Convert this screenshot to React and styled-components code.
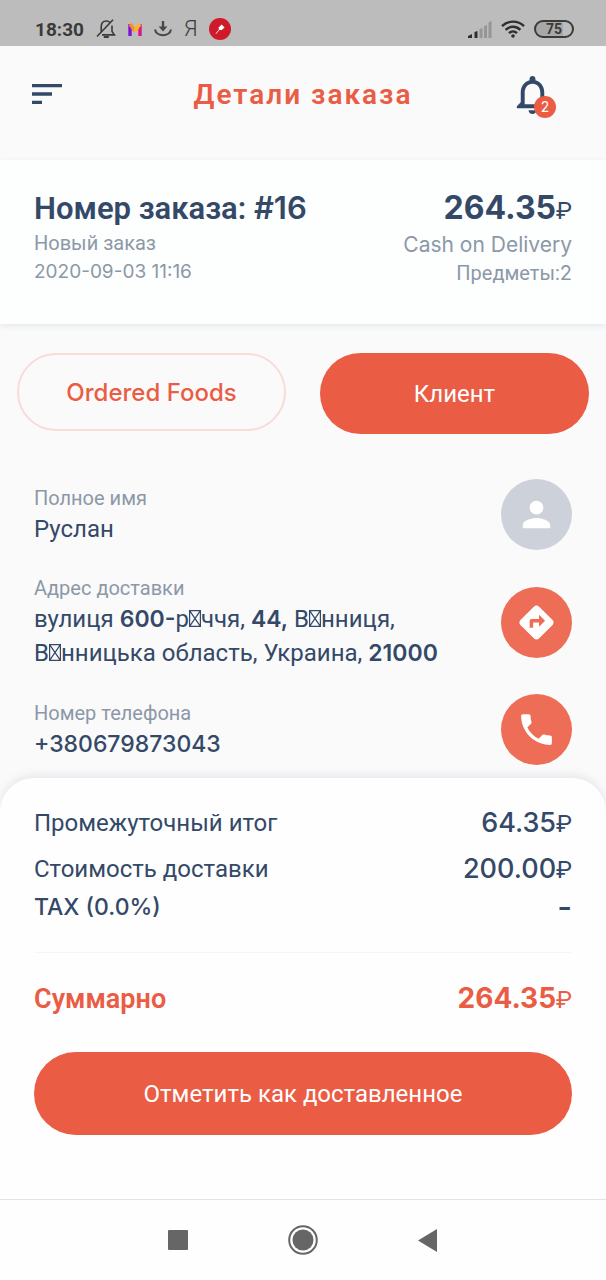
import React from 'react';
import styled, { createGlobalStyle, css } from 'styled-components';
import {
	MdSort,
	MdNotificationsNone,
	MdPerson,
	MdDirections,
	MdPhone,
} from 'react-icons/md';

const colors = {
	accent: '#ea5c44',
	main: '#344968',
	muted: '#8c98a8',
	page: '#fafafa',
};

const GlobalStyle = createGlobalStyle`
	* { box-sizing: border-box; }
	body {
		margin: 0;
		background: ${colors.page};
		color: ${colors.main};
		font-family: Roboto, "Noto Sans", sans-serif;
	}
	h1, h2, p { margin: 0; }
	button {
		padding: 0;
		border: 0;
		background: none;
		color: inherit;
		font-family: inherit;
		cursor: pointer;
	}
	svg { display: block; }
`

const Screen = styled.div`
	display: flex;
	flex-direction: column;
	min-height: 100vh;
`

const StatusBar = styled.div`
	display: flex;
	justify-content: space-between;
	align-items: center;
	height: 46px;
	padding: 12px 32px 0 35px;
	background: #bcbcbc;
	color: #3a3a3a;
`

const StatusGroup = styled.div`
	display: flex;
	align-items: center;
	gap: ${props => props.$gap};
`

const Clock = styled.span`
	font-size: 19px;
	font-weight: 700;
`

const Notifier = styled.span`
	font-size: 22px;
	line-height: 24px;
	font-weight: 300;
`

const Battery = styled.span`
	display: flex;
	align-items: center;
	justify-content: center;
	width: 40px;
	height: 18px;
	border: 2px solid #3a3a3a;
	border-radius: 9px;
	background: linear-gradient(to right, #a8a8a8 75%, transparent 75%);
	font-size: 14px;
	font-weight: 700;
`

const Header = styled.header`
	display: grid;
	grid-template-columns: 1fr auto 1fr;
	align-items: center;
	height: 114px;
	padding: 0 50px 18px 27px;
`

const MenuButton = styled.button`
	justify-self: start;
`

const Title = styled.h1`
	padding-left: 23px;
	color: ${colors.accent};
	font-size: 28px;
	font-weight: 600;
	letter-spacing: 2px;
`

const BellButton = styled.button`
	position: relative;
	justify-self: end;
`

const Badge = styled.span`
	position: absolute;
	right: 0;
	bottom: 0;
	width: 22px;
	border-radius: 50%;
	background: ${colors.accent};
	color: #fff;
	font: 14px/22px Inter, sans-serif;
`

const Summary = styled.section`
	display: flex;
	justify-content: space-between;
	height: 164px;
	padding: 28px 34px;
	background: #fdfefe;
	box-shadow: 0 2px 6px rgba(52, 73, 104, 0.1);
`

const SummaryColumn = styled.div`
	text-align: ${props => props.$align || 'left'};
`

const OrderNumber = styled.h2`
	font-size: 31px;
	line-height: 40px;
	font-weight: 600;
`

const Note = styled.p`
	color: ${colors.muted};
	font-size: 20px;
	line-height: 28px;
`

const Latin = styled.span`
	font-family: Inter, sans-serif;
	font-size: ${props => props.$size || 'inherit'};
	font-weight: ${props => props.$weight || 400};
`

const Amount = styled.span`
	font-family: Inter, sans-serif;
	font-size: ${props => props.$size};
	line-height: 40px;
	font-weight: ${props => props.$weight || 500};
`

const Currency = styled.span`
	font-family: Roboto, sans-serif;
	font-size: 24px;
	font-weight: 400;
`

const Tabs = styled.div`
	display: grid;
	grid-template-columns: 1fr 1fr;
	align-items: start;
	gap: 34px;
	padding: 29px 17px 45px;
`

const Tab = styled.button`
	height: 78px;
	border: 2px solid #f9dcd7;
	border-radius: 41px;
	color: ${colors.accent};
	font-size: 24px;
	font-family: Inter, sans-serif;
	font-weight: 500;
	${props => props.$active && css`
		height: 81px;
		border: 0;
		background: ${colors.accent};
		color: #fff;
		font-family: Roboto, sans-serif;
		font-weight: 400;
	`}
`

const Contacts = styled.section`
	display: flex;
	flex-direction: column;
	gap: 24px;
	padding: 0 34px 13px;
`

const Contact = styled.div`
	display: flex;
	justify-content: space-between;
	align-items: center;
`

const Value = styled.p`
	font-size: 24px;
	line-height: 34px;
`

const MissingGlyph = styled.svg`
	display: inline-block;
`

const RoundButton = styled.button`
	display: flex;
	align-items: center;
	justify-content: center;
	flex: none;
	width: 71px;
	height: 71px;
	border-radius: 50%;
	background: ${props => (props.disabled ? '#cdd1d9' : '#ed6d57')};
	color: #fff;
`

const Sheet = styled.section`
	flex: 1;
	padding: 22px 34px 64px;
	border-radius: 34px 34px 0 0;
	background: #fefefe;
	box-shadow: 0 -3px 8px rgba(52, 73, 104, 0.1);
`

const CostRow = styled.div`
	display: flex;
	justify-content: space-between;
	align-items: center;
	height: ${props => (props.$compact ? '30px' : '46px')};
	font-size: 24px;
`

const TotalRow = styled(CostRow)`
	height: 92px;
	margin: 30px 0 8px;
	border-top: 1px solid #f6f6f7;
	color: ${colors.accent};
	font-size: 27px;
	font-weight: 600;
`

const Deliver = styled.button`
	display: block;
	width: 100%;
	height: 83px;
	border-radius: 42px;
	background: ${colors.accent};
	color: #fff;
	font-size: 24px;
`

const NavBar = styled.nav`
	display: flex;
	justify-content: center;
	align-items: center;
	gap: 100px;
	height: 81px;
	border-top: 1px solid #e2e2e2;
	background: #fefefe;
	color: #666;
`

const Glyph = () => (
	<MissingGlyph width="12" height="17" viewBox="0 0 12 17" role="img" aria-label="і">
		<path d="M.6.6h10.8v15.8H.6zM.6.6l10.8 15.8M11.4.6L.6 16.4" fill="none" stroke="currentColor" strokeWidth="1.2" />
	</MissingGlyph>
)

const Price = ({ value, size, weight }) => (
	<Amount $size={size} $weight={weight}>{value}<Currency>₽</Currency></Amount>
)

const StatusIcons = () => (
	<React.Fragment>
		<svg width="20" height="20" viewBox="0 0 20 20" fill="none" stroke="#3a3a3a" strokeWidth="1.6">
			<path d="M1 17.5L17 .8M5.2 12.6V8C5.2 4.6 7 2 10.4 2c1.6 0 2.8.6 3.6 1.500M16 6.500V12.500l2.400 3.400H6" />
			<path d="M7.800 18h5" strokeWidth="2" />
		</svg>
		<svg width="14" height="13" viewBox="0 0 14 13" fill="none" strokeWidth="3.400">
			<path d="M2 13V1" stroke="#7a14d8" />
			<path d="M12 13V1" stroke="#d81590" />
			<path d="M2 1l5 7" stroke="#ff8a1e" />
			<path d="M7 8l5-7" stroke="#ffb51e" />
		</svg>
		<svg width="18" height="16" viewBox="0 0 18 16" fill="none" stroke="#484848" strokeWidth="2">
			<path d="M9 0v8" strokeWidth="2.400" />
			<path d="M4.600 5.500h8.800L9 10.500z" fill="#484848" stroke="none" />
			<path d="M1 8.500c1.200 7.600 14.800 7.600 16 0" />
		</svg>
		<Notifier>Я</Notifier>
		<svg width="22" height="22" viewBox="0 0 22 22">
			<circle cx="11" cy="11" r="11" fill="#cf1a2c" />
			<path d="M6.500 15.500l3.500-4-.6-1.800 3.200-3.200 3 3-3.200 2.700-1.700-.5-3.500 4z" fill="#fff" />
		</svg>
	</React.Fragment>
)

const SignalIcon = () => (
	<svg width="24" height="17" viewBox="0 0 24 17" fill="#2e2e2e">
		<path d="M0 17v-2l4-2v4zM6.500 17v-6l3-1v7z" />
		<path d="M11.500 17V8l3-1v10zM16 17V5l3-1v13zM20.500 17V1.500L23.500 0v17z" fill="#969696" />
	</svg>
)

const WifiIcon = () => (
	<svg width="24" height="18" viewBox="0 0 24 18" fill="none" stroke="#2e2e2e" strokeWidth="2.400">
		<path d="M1 6.200C7 .1 17 .1 23 6.200M4.600 9.800c4.200-4.100 10.600-4.100 14.800 0M8 13.200c2.300-2.200 5.700-2.200 8 0" />
		<circle cx="12" cy="16" r="1.800" fill="#2e2e2e" stroke="none" />
	</svg>
)

class App extends React.Component {
	render() {
		return (
			<Screen>
				<GlobalStyle />
				<StatusBar>
					<StatusGroup $gap="12px">
						<Clock>18:30</Clock>
						<StatusIcons />
					</StatusGroup>
					<StatusGroup $gap="9px">
						<SignalIcon />
						<WifiIcon />
						<Battery>75</Battery>
					</StatusGroup>
				</StatusBar>
				<Header>
					<MenuButton aria-label="Меню"><MdSort size={40} color={colors.main} /></MenuButton>
					<Title>Детали заказа</Title>
					<BellButton aria-label="Уведомления">
						<MdNotificationsNone size={47} color={colors.main} />
						<Badge>2</Badge>
					</BellButton>
				</Header>
				<Summary>
					<SummaryColumn>
						<OrderNumber>Номер заказа: <Latin $weight={600}>#16</Latin></OrderNumber>
						<Note>Новый заказ</Note>
						<Note><Latin $size="19px">2020-09-03 11:16</Latin></Note>
					</SummaryColumn>
					<SummaryColumn $align="right">
						<Price value="264.35" size="32px" weight={700} />
						<Note><Latin $size="21px">Cash on Delivery</Latin></Note>
						<Note>Предметы:<Latin>2</Latin></Note>
					</SummaryColumn>
				</Summary>
				<Tabs>
					<Tab>Ordered Foods</Tab>
					<Tab $active>Клиент</Tab>
				</Tabs>
				<Contacts>
					<Contact>
						<div>
							<Note>Полное имя</Note>
							<Value>Руслан</Value>
						</div>
						<RoundButton disabled aria-label="Профиль"><MdPerson size={41} /></RoundButton>
					</Contact>
					<Contact>
						<div>
							<Note>Адрес доставки</Note>
							<Value>
								вулиця <Latin $size="23px" $weight={600}>600-</Latin>р<Glyph />ччя, <Latin $size="23px" $weight={600}>44,</Latin> В<Glyph />нниця,
								<br />
								В<Glyph />нницька область, Украина, <Latin $size="23px" $weight={600}>21000</Latin>
							</Value>
						</div>
						<RoundButton aria-label="Маршрут"><MdDirections size={41} /></RoundButton>
					</Contact>
					<Contact>
						<div>
							<Note>Номер телефона</Note>
							<Value><Latin $size="23px" $weight={500}>+380679873043</Latin></Value>
						</div>
						<RoundButton aria-label="Позвонить"><MdPhone size={41} /></RoundButton>
					</Contact>
				</Contacts>
				<Sheet>
					<CostRow>
						<span>Промежуточный итог</span>
						<Price value="64.35" size="27px" />
					</CostRow>
					<CostRow>
						<span>Стоимость доставки</span>
						<Price value="200.00" size="27px" />
					</CostRow>
					<CostRow $compact>
						<Latin $size="23px" $weight={500}>TAX (0.0%)</Latin>
						<Amount $size="32px">-</Amount>
					</CostRow>
					<TotalRow>
						<span>Суммарно</span>
						<Price value="264.35" size="28px" weight={700} />
					</TotalRow>
					<Deliver>Отметить как доставленное</Deliver>
				</Sheet>
				<NavBar>
					<button aria-label="Недавние">
						<svg width="20" height="20"><rect width="20" height="20" rx="1" fill="currentColor" /></svg>
					</button>
					<button aria-label="Домой">
						<svg width="30" height="30" viewBox="0 0 30 30">
							<circle cx="15" cy="15" r="13.800" fill="none" stroke="currentColor" strokeWidth="2" />
							<circle cx="15" cy="15" r="10.500" fill="currentColor" />
						</svg>
					</button>
					<button aria-label="Назад">
						<svg width="20" height="23" viewBox="0 0 20 23"><path d="M0 11.500L19 0v23z" fill="currentColor" /></svg>
					</button>
				</NavBar>
			</Screen>
		)
	}
}

export default App
